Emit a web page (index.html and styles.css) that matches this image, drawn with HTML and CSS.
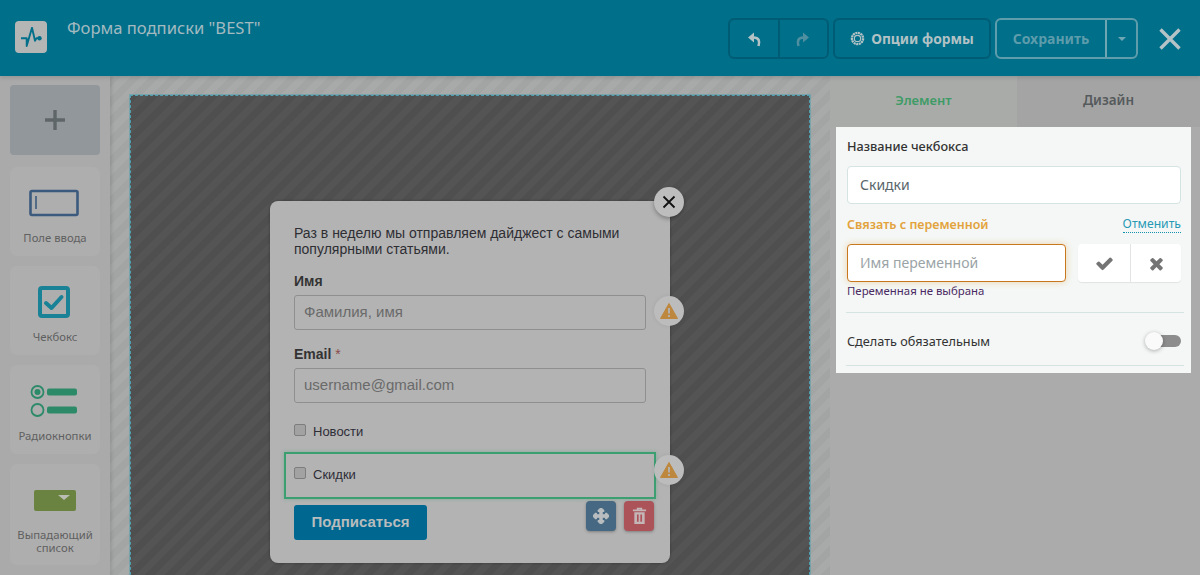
FILE: index.html
```html
<!DOCTYPE html>
<html lang="ru">
<head>
<meta charset="utf-8">
<title>Форма подписки</title>
<link rel="stylesheet" href="styles.css">
</head>
<body>
<header class="topbar">
  <div class="logo">
    <svg width="21" height="20" viewBox="0 0 21 20"><path d="M0 11.300h5.700V19L11 .8l3 13 1.500-2.700H18" fill="none" stroke="#006f8a" stroke-width="1.900" stroke-linejoin="round"/><circle cx="18.500" cy="11.300" r="2.200" fill="#006f8a"/></svg>
  </div>
  <div class="title">Форма подписки "BEST"</div>
  <div class="actions">
    <div class="btn-group dark">
      <button class="icon-btn"><svg width="16" height="16" viewBox="0 0 16 16"><path d="M12.500 15c1.500-5 .5-8.500-5-8.500" fill="none" stroke="#b3c2c5" stroke-width="2.600"/><path d="M8 1.500v10L2 6.500z" fill="#b3c2c5"/></svg></button>
      <button class="icon-btn"><svg width="16" height="16" viewBox="0 0 16 16"><path d="M3.500 15c-1.500-5-.5-8.500 5-8.500" fill="none" stroke="#4f8f9f" stroke-width="2.600"/><path d="M8 1.500v10l6-5z" fill="#4f8f9f"/></svg></button>
    </div>
    <button class="options">
      <svg width="15" height="15" viewBox="0 0 16 16"><circle cx="8" cy="8" r="6" fill="none" stroke="#b3c2c5" stroke-width="2.400" stroke-dasharray="2.200 .6"/><circle cx="8" cy="8" r="3.400" fill="none" stroke="#b3c2c5" stroke-width="1.300"/></svg>
      Опции формы
    </button>
    <div class="btn-group light">
      <button class="save">Сохранить</button>
      <button class="caret-btn"><span class="caret"></span></button>
    </div>
    <svg class="close-x" width="24" height="24" viewBox="0 0 24 24"><path d="M2.500 2.500l19 19M21.500 2.500l-19 19" stroke="#b5c3c6" stroke-width="3.400" fill="none"/></svg>
  </div>
</header>

<main class="workspace">
  <aside class="sidebar">
    <div class="add-card"><svg width="22" height="22" viewBox="0 0 22 22"><path d="M11 1v20M1 11h20" stroke="#5f6668" stroke-width="3.400"/></svg></div>
    <div class="tool">
      <svg class="tool-icon" width="50" height="28" viewBox="0 0 50 28"><rect x="1.500" y="2" width="47" height="24" rx="1.500" fill="none" stroke="#3b5a7d" stroke-width="2.600"/><path d="M7 7v13" stroke="#3b5a7d" stroke-width="1.600"/></svg>
      <span>Поле ввода</span>
    </div>
    <div class="tool">
      <svg class="tool-icon" width="32" height="32" viewBox="0 0 32 32"><rect x="2" y="2" width="28" height="28" rx="2" fill="none" stroke="#1a8296" stroke-width="4"/><path d="M8 17l5.500 5 10-11" fill="none" stroke="#1a8296" stroke-width="4" stroke-linecap="round" stroke-linejoin="round"/></svg>
      <span>Чекбокс</span>
    </div>
    <div class="tool">
      <svg class="tool-icon" width="48" height="32" viewBox="0 0 48 32"><circle cx="7.500" cy="7" r="6" fill="none" stroke="#2c8a69" stroke-width="1.800"/><circle cx="7.500" cy="7" r="3" fill="#2c8a69"/><circle cx="7.500" cy="25" r="6" fill="none" stroke="#2c8a69" stroke-width="1.800"/><rect x="17" y="3.500" width="30" height="7" rx="2" fill="#2c8a69"/><rect x="17" y="21.500" width="30" height="7" rx="2" fill="#2c8a69"/></svg>
      <span>Радиокнопки</span>
    </div>
    <div class="tool tall">
      <div class="select-icon"><span class="select-caret"></span></div>
      <span>Выпадающий<br>список</span>
    </div>
  </aside>

  <section class="canvas">
    <div class="frame">
      <div class="popup">
        <button class="popup-close"><svg width="14" height="14" viewBox="0 0 14 14"><path d="M1.500 1.500l11 11M12.500 1.500l-11 11" stroke="#111" stroke-width="1.800"/></svg></button>
        <p class="intro">Раз в неделю мы отправляем дайджест с самыми популярными статьями.</p>
        <div class="field first">
          <label>Имя</label>
          <div class="fake-input">Фамилия, имя</div>
          <div class="warn-badge"><svg width="18" height="16" viewBox="0 0 18 16"><path d="M9 .5l8.500 15H.5z" fill="#bd883e" stroke="#bd883e" stroke-linejoin="round"/><path d="M9 5v5.500M9 12v2" stroke="#b3b3b3" stroke-width="1.800"/></svg></div>
        </div>
        <div class="field">
          <label>Email <em>*</em></label>
          <div class="fake-input">username@gmail.com</div>
        </div>
        <div class="check-row"><span class="box"></span>Новости</div>
        <div class="check-row selected"><span class="box"></span>Скидки
          <div class="warn-badge"><svg width="18" height="16" viewBox="0 0 18 16"><path d="M9 .5l8.500 15H.5z" fill="#bd883e" stroke="#bd883e" stroke-linejoin="round"/><path d="M9 5v5.500M9 12v2" stroke="#b3b3b3" stroke-width="1.800"/></svg></div>
          <div class="row-tools">
            <button class="mini move"><svg width="16" height="16" viewBox="0 0 1792 1792"><path fill="#b9bdbf" stroke="#b9bdbf" stroke-width="130" d="M1792 896q0 26-19 45l-256 256q-19 19-45 19t-45-19-19-45v-128h-384v384h128q26 0 45 19t19 45-19 45l-256 256q-19 19-45 19t-45-19l-256-256q-19-19-19-45t19-45 45-19h128v-384h-384v128q0 26-19 45t-45 19-45-19l-256-256q-19-19-19-45t19-45l256-256q19-19 45-19t45 19 19 45v128h384v-384h-128q-26 0-45-19t-19-45 19-45l256-256q19-19 45-19t45 19l256 256q19 19 19 45t-19 45-45 19h-128v384h384v-128q0-26 19-45t45-19 45 19l256 256q19 19 19 45z"/></svg></button>
            <button class="mini trash"><svg width="15" height="18" viewBox="0 0 16 18"><path d="M1 3h14M6 3V1h4v2" fill="none" stroke="#c4b5b6" stroke-width="1.800"/><path fill="#c4b5b6" d="M2.500 5h11v12.500h-11zM5.300 7.500v7.500h1.800V7.500zM8.900 7.500v7.500h1.800V7.500z" fill-rule="evenodd"/></svg></button>
          </div>
        </div>
        <button class="submit">Подписаться</button>
      </div>
    </div>
  </section>

  <aside class="inspector">
    <nav class="tabs">
      <div class="tab active">Элемент</div>
      <div class="tab">Дизайн</div>
    </nav>
    <div class="settings">
      <div class="set-label">Название чекбокса</div>
      <div class="set-input">Скидки</div>
      <div class="bind-row">
        <span class="bind-label">Связать с переменной</span>
        <a class="cancel">Отменить</a>
      </div>
      <div class="var-row">
        <div class="set-input var-input">Имя переменной</div>
        <div class="var-btns">
          <button><svg width="19" height="19" viewBox="0 0 1792 1792"><path fill="#747474" d="M1671 566q0 40-28 68l-724 724-136 136q-28 28-68 28t-68-28l-136-136-362-362q-28-28-28-68t28-68l136-136q28-28 68-28t68 28l294 295 656-657q28-28 68-28t68 28l136 136q28 28 28 68z"/></svg></button>
          <button><svg width="19" height="19" viewBox="0 0 1792 1792"><path fill="#747474" d="M1490 1322q0 40-28 68l-136 136q-28 28-68 28t-68-28l-294-294-294 294q-28 28-68 28t-68-28l-136-136q-28-28-28-68t28-68l294-294-294-294q-28-28-28-68t28-68l136-136q28-28 68-28t68 28l294 294 294-294q28-28 68-28t68 28l136 136q28 28 28 68t-28 68l-294 294 294 294q28 28 28 68z"/></svg></button>
        </div>
      </div>
      <div class="var-error">Переменная не выбрана</div>
      <div class="toggle-row">
        <span>Сделать обязательным</span>
        <span class="toggle"><span class="knob"></span></span>
      </div>
    </div>
  </aside>
</main>
</body>
</html>
```
FILE: styles.css
```css
* { box-sizing: border-box; }
html, body { margin: 0; height: 575px; overflow: hidden; }
body { font-family: "Noto Sans", sans-serif; background: #a9aaa9; display: flex; flex-direction: column; }
button { font-family: inherit; padding: 0; cursor: pointer; }

.topbar { height: 76px; flex: none; background: #006f8a; display: flex; align-items: flex-start; padding: 21px 18px 0 15px; position: relative; z-index: 2; box-shadow: 0 2px 4px rgba(0,0,0,.12); }
.logo { width: 32px; height: 32px; background: #b4b6b6; border-radius: 4px; display: flex; align-items: center; justify-content: center; }
.title { margin: -3px 0 0 20px; font-size: 16.600px; line-height: 20px; color: #a3bac0; }
.actions { margin: -3px 0 0 auto; display: flex; align-items: center; }
.btn-group { display: flex; height: 41px; border-radius: 6px; border: 2px solid; }
.btn-group.dark { width: 101px; border-color: #005c74; }
.btn-group.light { width: 143px; border-color: #5f9dac; margin-left: 4px; }
.icon-btn { flex: 1; background: none; border: 0; display: flex; align-items: center; justify-content: center; }
.icon-btn + .icon-btn { border-left: 2px solid #005c74; }
.options { width: 158px; height: 41px; margin-left: 4px; background: none; border: 2px solid #005c74; border-radius: 6px; color: #b3c2c5; font-size: 13.800px; font-weight: 700; display: flex; align-items: center; justify-content: center; gap: 6px; }
.save { width: 110px; background: none; border: 0; border-right: 2px solid #6ea6b4; color: #5d9cab; font-size: 14px; font-weight: 700; }
.caret-btn { flex: 1; background: none; border: 0; display: flex; align-items: center; justify-content: center; }
.caret { border: 4px solid transparent; border-top-color: #6ea6b4; border-bottom: 0; }
.close-x { margin-left: 20px; }

.workspace { flex: 1; display: flex; min-height: 0; }
.sidebar { width: 110px; flex: none; padding: 9px 10px 0; display: flex; flex-direction: column; gap: 10px; background: #a9aaa9; box-shadow: 2px 0 3px rgba(0,0,0,.1); position: relative; z-index: 1; overflow: hidden; }
.add-card { height: 70px; flex: none; background: #92979c; border-radius: 4px; display: flex; align-items: center; justify-content: center; margin-bottom: 2px; }
.tool { height: 89px; flex: none; background: #aeaeae; border-radius: 7px; display: flex; flex-direction: column; align-items: center; font-size: 11.300px; line-height: 13px; color: #5f6060; text-align: center; padding-top: 22px; }
.tool span { margin-top: auto; margin-bottom: 12px; }
.tool-icon { flex: none; margin-right: 2px; }
.tool:nth-child(3) { padding-top: 20px; }
.tool:nth-child(4) { padding-top: 20px; }
.tool.tall { height: 101px; padding-top: 26px; }
.tool.tall span { margin-bottom: 11px; }
.select-icon { width: 42px; height: 21px; background: #6b8340; border-radius: 2px; display: flex; align-items: center; justify-content: flex-end; padding-right: 8px; }
.select-caret { border: 5px solid transparent; border-top-color: #b9bdb3; border-bottom: 0; border-left-width: 6px; border-right-width: 6px; margin-right: -2px; }

.canvas { width: 720px; flex: none; padding: 19px 20px 0; background: repeating-linear-gradient(-45deg, #a3a5a4 0 7px, #a8aaa9 7px 14px); overflow: hidden; }
.frame { height: 500px; border: 1px dashed #4f9fb0; outline: 1px solid rgba(90,160,175,.6); background: repeating-linear-gradient(-45deg, #4e4f4e 0 7px, #535453 7px 14px); padding-top: 105px; }
.popup { width: 400px; height: 362px; margin: 0 auto; background: #b3b3b3; border-radius: 8px; padding: 24px 24px 0; position: relative; font-family: "Liberation Sans", Arial, sans-serif; color: #333; box-shadow: 0 0 3px rgba(0,0,0,.3); }
.popup-close { position: absolute; top: -14px; right: -14px; width: 30px; height: 30px; border-radius: 50%; border: 0; background: #bdbdbd; display: flex; align-items: center; justify-content: center; box-shadow: 0 2px 4px rgba(0,0,0,.3); }
.intro { margin: 0; font-size: 14px; line-height: 16px; color: #2e2e33; }
.field { position: relative; }
.field.first { margin-top: 16px; }
.field + .field { margin-top: 16px; }
.field label { display: block; font-size: 14px; line-height: 16px; font-weight: 700; color: #333; margin-bottom: 6px; }
.field em { color: #8b4a4a; font-style: normal; font-weight: 400; }
.fake-input { width: 352px; height: 35px; border: 1px solid #8f8f8f; border-radius: 3px; padding: 0 9px; font-size: 15px; line-height: 31px; color: #6a6a6a; }
.warn-badge { position: absolute; width: 30px; height: 30px; border-radius: 50%; background: #bcbcbc; display: flex; align-items: center; justify-content: center; box-shadow: 0 0 4px rgba(0,0,0,.08); }
.field .warn-badge { right: -38px; bottom: 4px; }
.check-row { display: flex; align-items: center; font-size: 13px; color: #2e2e38; margin-top: 20px; height: 16px; }
.box { width: 12px; height: 12px; border: 1px solid #7d7d7d; border-radius: 2px; background: #a2a2a2; margin-right: 7px; margin-bottom: 3px; }
.check-row.selected { position: relative; margin: 13px -10px 0; height: 47px; border: 2px solid #3c9f72; padding: 0 0 2px 8px; box-shadow: 0 0 4px rgba(60,159,114,.4); }
.selected .warn-badge { right: -30px; top: 1px; }
.row-tools { position: absolute; right: 0; top: 47px; display: flex; gap: 8px; }
.mini { width: 30px; height: 30px; border: 0; border-radius: 4px; display: flex; align-items: center; justify-content: center; box-shadow: 0 1px 3px rgba(0,0,0,.3); }
.mini.move { background: #466882; }
.mini.trash { background: #ac535a; }
.submit { display: block; margin-top: 6px; width: 133px; height: 35px; background: #006790; color: #b8bcbd; border: 0; border-radius: 3px; padding-bottom: 2px; font-family: "Liberation Sans", Arial, sans-serif; font-size: 15px; font-weight: 700; }

.inspector { flex: 1; background: #aaabaa; }
.tabs { display: flex; height: 51px; }
.tab { flex: none; font-size: 13.500px; font-weight: 600; line-height: 49px; text-align: center; color: #555a5c; background: #a4a4a4; width: 183px; }
.tab.active { width: 187px; background: #a9aba9; color: #3e9b66; font-size: 13px; }
.settings { width: 355px; height: 246px; margin-left: 6px; background: #f4f7f6; padding: 10px 10px 0 11px; font-size: 12.700px; color: #333; position: relative; }
.set-label { line-height: 18px; font-weight: 500; }
.set-input { height: 38px; margin-top: 11px; border: 1px solid #d5e3e3; border-radius: 4px; background: #fff; padding: 0 12px; line-height: 36px; font-size: 14px; color: #59666c; }
.bind-row { display: flex; justify-content: space-between; align-items: flex-end; margin-top: 11px; height: 18px; }
.bind-label { color: #e3a33c; font-weight: 600; font-size: 12.500px; }
.cancel { color: #2899b5; border-bottom: 1px dotted #1193ad; line-height: 16px; font-size: 12.200px; }
.var-row { display: flex; justify-content: space-between; margin-top: 11px; }
.set-input.var-input { width: 219px; margin: 0; border-color: #c9771f; box-shadow: 0 0 7px rgba(230,160,60,.4); color: #9aa3a6; }
.var-btns { display: flex; width: 103px; height: 38px; border-radius: 4px; background: #fff; box-shadow: 0 1px 1px rgba(0,0,0,.08); }
.var-btns button { flex: none; width: 52px; background: none; border: 0; display: flex; align-items: center; justify-content: center; }
.var-btns button + button { width: 51px; border-left: 1px solid #e1e5e5; }
.var-error { margin-top: 2px; padding-bottom: 14px; border-bottom: 1px solid #d5e3e3; margin-right: -3px; margin-left: -1px; padding-left: 1px; font-size: 11.400px; line-height: 14px; color: #4b2a63; }
.toggle-row { display: flex; justify-content: space-between; align-items: center; height: 53px; border-bottom: 1px solid #d5e3e3; margin-right: -3px; margin-left: -1px; padding: 4px 3px 0 1px; }
.toggle { width: 27px; height: 12px; background: #8d8d8d; border-radius: 6px; position: relative; }
.knob { position: absolute; left: -9px; top: -3px; width: 18px; height: 18px; border-radius: 50%; background: #fafafa; box-shadow: 0 1px 4px rgba(0,0,0,.3); }
```
